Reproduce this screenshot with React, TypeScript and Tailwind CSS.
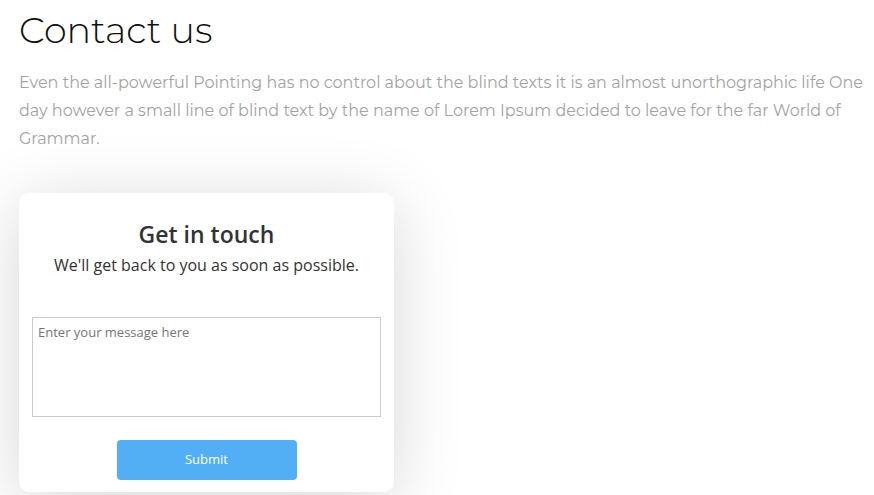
export default function App() {
  return (
    <div className="min-h-screen bg-white pl-[19px] pr-[4px] pt-[6px]">
      <h1 className="font-['Montserrat','Noto_Sans',sans-serif] text-[36.5px] font-light leading-[48px] text-[#111]">
        Contact us
      </h1>
      <p className="mt-[15px] font-['Montserrat','Noto_Sans',sans-serif] text-[16px] leading-[28px] text-[#a3a3a3]">
        Even the all-powerful Pointing has no control about the blind texts it is an almost unorthographic life One day however a small line of blind text by the name of Lorem Ipsum decided to leave for the far World of Grammar.
      </p>

      <div className="mt-[40px] flex w-[375px] flex-col items-center rounded-[10px] bg-white px-[13px] pb-[12px] pt-[25px] font-['Open_Sans',sans-serif] shadow-[0_10px_70px_rgba(0,0,0,0.16)]">
        <h2 className="text-[23px] font-semibold leading-[32px] text-[#333]">Get in touch</h2>
        <p className="mt-[3px] text-[16px] leading-[24px] text-[#333]">
          We'll get back to you as soon as possible.
        </p>
        <textarea
          placeholder="Enter your message here"
          className="mt-[40px] h-[100px] w-full resize-none border border-[#c8cad8] px-[5px] py-[5px] text-[13px] text-[#333] outline-none placeholder:text-[#757575]"
        />
        <button className="mt-[23px] h-[40px] w-[180px] rounded-[4px] bg-[#52aff5] text-[13px] text-white">
          Submit
        </button>
      </div>
    </div>
  );
}
